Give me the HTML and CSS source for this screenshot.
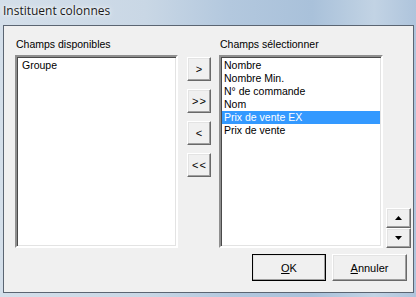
FILE: index.html
```html
<!DOCTYPE html>
<html lang="fr">
<head>
    <meta charset="UTF-8">
    <meta name="viewport" content="width=device-width, initial-scale=1.0">
    <title>Instituent colonnes</title>
    <link rel="stylesheet" href="styles.css">
</head>
<body>
    <div class="window">
        <div class="titlebar">Instituent colonnes</div>

        <div class="client">
            <div class="columns">
                <!-- Available fields -->
                <div class="col col-left">
                    <div class="label">Champs disponibles</div>
                    <ul class="listbox">
                        <li>Groupe</li>
                    </ul>
                </div>

                <!-- Move buttons -->
                <div class="movers">
                    <button class="btn mover">&gt;</button>
                    <button class="btn mover">&gt;&gt;</button>
                    <button class="btn mover">&lt;</button>
                    <button class="btn mover">&lt;&lt;</button>
                </div>

                <!-- Selected fields -->
                <div class="col col-right">
                    <div class="label">Champs sélectionner</div>
                    <ul class="listbox">
                        <li>Nombre</li>
                        <li>Nombre Min.</li>
                        <li>N° de commande</li>
                        <li>Nom</li>
                        <li class="selected">Prix de vente EX</li>
                        <li>Prix de vente</li>
                    </ul>
                </div>

                <!-- Order buttons -->
                <div class="order">
                    <button class="btn arrow">
                        <svg width="7" height="4" viewBox="0 0 7 4"><path d="M3.5 0 L7 4 L0 4 Z" fill="#000"/></svg>
                    </button>
                    <button class="btn arrow">
                        <svg width="7" height="4" viewBox="0 0 7 4"><path d="M0 0 L7 0 L3.5 4 Z" fill="#000"/></svg>
                    </button>
                </div>
            </div>

            <div class="actions">
                <button class="btn default"><u>O</u>K</button>
                <button class="btn cancel"><u>A</u>nnuler</button>
            </div>
        </div>
    </div>
</body>
</html>
```

FILE: styles.css
```css
/* Page and window frame */
body {
    margin: 0;
    font-family: 'Liberation Sans', Arial, sans-serif;
    font-size: 10.5px;
    color: #000;
    background: #b9cde2;
}

.window {
    width: 416px;
    height: 297px;
    box-sizing: border-box;
    padding: 0 2px 0 3px;
    background: linear-gradient(90deg, #d4dfea 0%, #c9d7e5 35%, #b3c8de 55%, #a9c1da 75%, #c2d3e4 90%, #aec4dc 100%);
}

/* Aero-like caption */
.titlebar {
    height: 25px;
    line-height: 22px;
    font-family: 'Open Sans', 'Liberation Sans', sans-serif;
    font-size: 12px;
    color: #1b1b1b;
    text-shadow: 0 0 6px #fff, 0 0 3px #fff;
}

/* Dialog body */
.client {
    height: 268px;
    box-sizing: border-box;
    background: #f0f0f0;
    border: 1px solid #5b6572;
    padding: 12px 0 0 11px;
}

.columns {
    display: flex;
    align-items: flex-start;
}

.label {
    height: 13px;
    line-height: 13px;
    margin-bottom: 4px;
    padding-left: 1px;
}

/* Sunken list boxes */
.listbox {
    list-style: none;
    margin: 0;
    padding: 2px 0 0 0;
    height: 193px;
    box-sizing: border-box;
    background: #fff;
    border-style: solid;
    border-width: 2px;
    border-color: #8f8f8f #ffffff #ffffff #8f8f8f;
    box-shadow: inset 1px 1px 0 #4a4a4a, inset -1px -1px 0 #e3e3e3;
}

.listbox li {
    height: 13px;
    line-height: 13px;
    padding-left: 2px;
}

.listbox li.selected {
    background: #3399ff;
    color: #fff;
}

.col-left .listbox {
    width: 163px;
    padding-left: 3px;
}

.col-right .listbox {
    width: 164px;
}

.col-right .listbox li {
    margin: 0 1px;
}

/* Raised classic buttons */
.btn {
    font-family: inherit;
    font-size: 11px;
    color: #000;
    background: #f0f0f0;
    padding: 0;
    box-sizing: border-box;
    border-style: solid;
    border-width: 1px;
    border-color: #ffffff #696969 #696969 #ffffff;
    box-shadow: inset -1px -1px 0 #a0a0a0, inset 1px 1px 0 #e3e3e3;
    display: flex;
    align-items: center;
    justify-content: center;
}

.movers {
    display: flex;
    flex-direction: column;
    gap: 8px;
    margin: 19px 8px 0 9px;
}

.mover {
    width: 24px;
    height: 24px;
    font-size: 11px;
    letter-spacing: 1px;
    padding-left: 1px;
}

.order {
    display: flex;
    flex-direction: column;
    margin: 170px 0 0 3px;
}

.arrow {
    width: 25px;
    height: 20px;
}

/* OK / Annuler */
.actions {
    display: flex;
    justify-content: flex-end;
    gap: 6px;
    margin: 6px 6px 0 0;
}

.default,
.cancel {
    width: 75px;
    height: 27px;
}

.default {
    outline: 1px solid #000;
    outline-offset: -1px;
    width: 74px;
}

u {
    text-decoration: underline;
    text-underline-offset: 1px;
}
```
